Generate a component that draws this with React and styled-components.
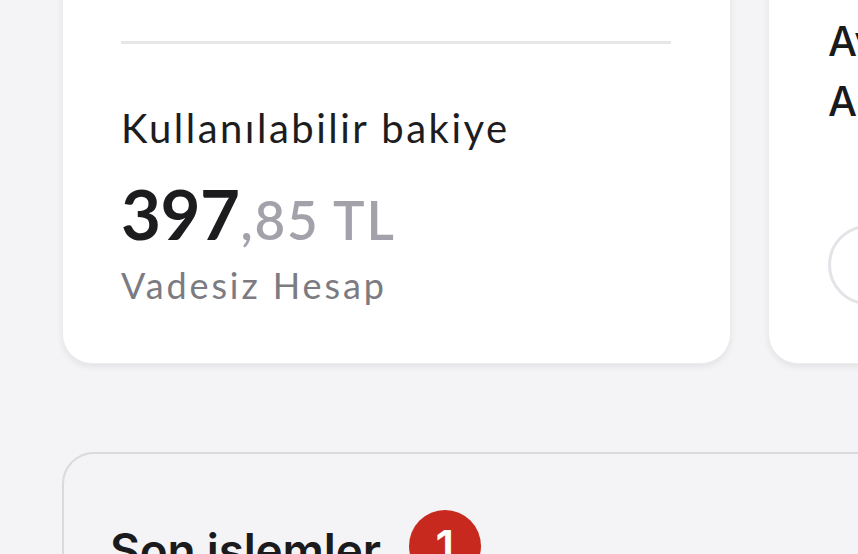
import React from "react";
import styled, { createGlobalStyle } from "styled-components";

const Global = createGlobalStyle`
  html, body { margin: 0; padding: 0; background: #f4f4f6; }
  body { font-family: "Inter", "Liberation Sans", sans-serif; }
`;

const Page = styled.div`
  width: 858px;
  height: 554px;
  overflow: hidden;
  box-sizing: border-box;
  padding-left: 62px;
  background: #f4f4f6;
`;

const CardRow = styled.div`
  display: flex;
  gap: 37px;
  margin-top: -40px;
`;

const Card = styled.div`
  flex: 0 0 669px;
  height: 404px;
  box-sizing: border-box;
  background: #ffffff;
  border-radius: 30px;
  border: 1px solid #ececef;
  box-shadow: 0 3px 6px rgba(20, 20, 40, 0.07);
  padding: ${(p) => p.$pad};
  display: flex;
  flex-direction: column;
`;

const Divider = styled.div`
  height: 3px;
  background: #e7e7ea;
`;

const Label = styled.div`
  font-family: "Lato", "Liberation Sans", sans-serif;
  font-size: 40px;
  line-height: 44px;
  color: #1d1d1f;
  margin-top: 62px;
  letter-spacing: 2.5px;
`;

const Amount = styled.div`
  display: flex;
  align-items: baseline;
  font-family: "Lato", "Liberation Sans", sans-serif;
  margin-top: 32px;
  line-height: 64px;
`;

const Whole = styled.span`
  font-size: 69px;
  font-weight: 700;
  color: #1c1c1e;
  letter-spacing: -0.5px;
`;

const Fraction = styled.span`
  font-size: 53px;
  font-weight: 600;
  color: #a3a2ab;
  letter-spacing: 1.8px;
  margin-left: 1px;
`;

const SubLabel = styled.div`
  font-family: "Lato", "Liberation Sans", sans-serif;
  font-size: 36px;
  line-height: 40px;
  color: #7c7b81;
  letter-spacing: 2.9px;
  margin-top: 13px;
`;

const SideTitle = styled.div`
  font-family: "Inter", "Liberation Sans", sans-serif;
  font-size: 41px;
  font-weight: 500;
  line-height: 60px;
  color: #1a1a1c;
  white-space: nowrap;
`;

const Ring = styled.div`
  width: 74px;
  height: 74px;
  border-radius: 50%;
  border: 3px solid #e3e3e8;
  margin-top: 94px;
`;

const Section = styled.div`
  margin-top: 88px;
  width: 900px;
  height: 300px;
  box-sizing: border-box;
  border: 2px solid #dadade;
  border-radius: 32px;
  background: #f4f4f6;
  padding: 56px 0 0 46px;
`;

const SectionHeader = styled.div`
  display: flex;
  align-items: center;
  gap: 28px;
`;

const SectionTitle = styled.div`
  font-family: "Inter", "Liberation Sans", sans-serif;
  font-size: 46px;
  font-weight: 600;
  line-height: 48px;
  color: #1b1b1d;
  letter-spacing: -0.2px;
  margin-top: 8px;
`;

const Badge = styled.div`
  width: 72px;
  height: 72px;
  border-radius: 50%;
  background: #c8291f;
  color: #fff;
  display: flex;
  align-items: center;
  justify-content: center;
  font-family: "Inter", "Liberation Sans", sans-serif;
  font-size: 44px;
  font-weight: 600;
`;

export default function App() {
  return (
    <Page>
      <Global />
      <CardRow>
        <Card $pad="80px 59px 0 58px">
          <Divider />
          <Label>Kullanılabilir bakiye</Label>
          <Amount>
            <Whole>397</Whole>
            <Fraction>,85 TL</Fraction>
          </Amount>
          <SubLabel>Vadesiz Hesap</SubLabel>
        </Card>
        <Card $pad="50px 0 0 59px">
          <SideTitle>Avans hesap</SideTitle>
          <SideTitle>A Kart</SideTitle>
          <Ring />
        </Card>
      </CardRow>
      <Section>
        <SectionHeader>
          <SectionTitle>Son işlemler</SectionTitle>
          <Badge>1</Badge>
        </SectionHeader>
      </Section>
    </Page>
  );
}
